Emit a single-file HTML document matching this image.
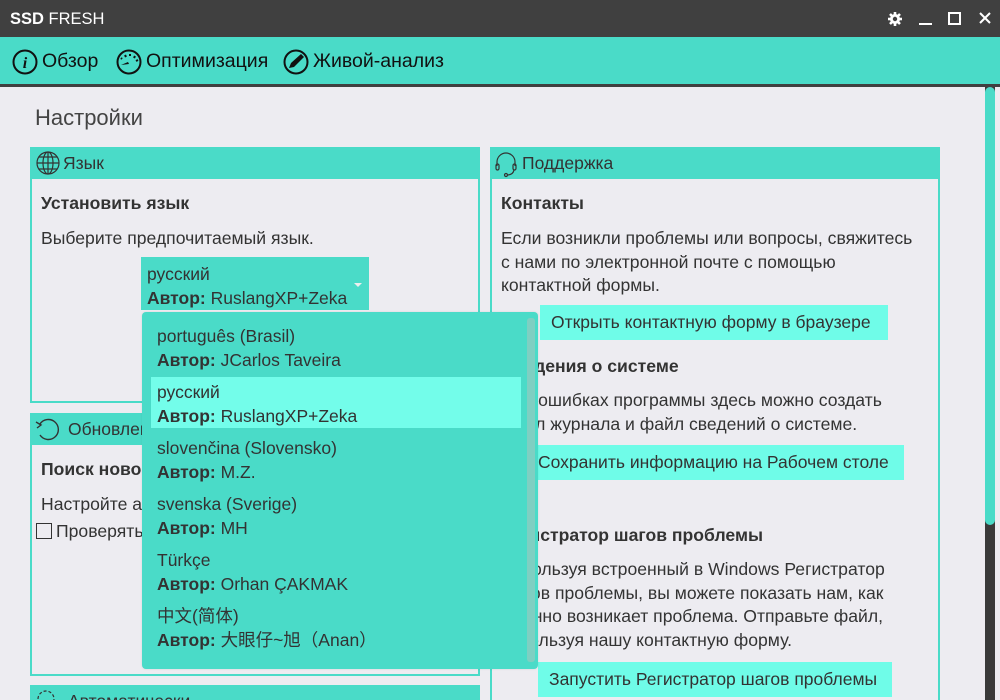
<!DOCTYPE html>
<html><head><meta charset="utf-8"><style>
*{margin:0;padding:0;box-sizing:border-box}
html,body{width:1000px;height:700px;overflow:hidden}
body{background:#edecf1;font-family:"Liberation Sans","Noto Sans CJK SC",sans-serif;color:#333;position:relative;font-size:17px}
.a{position:absolute;white-space:nowrap}
.tb{left:0;top:0;width:1000px;height:37px;background:#404040}
.nav{left:0;top:37px;width:1000px;height:47px;background:#4adbc8}
.line{left:0;top:84px;width:1000px;height:3px;background:#404040}
.ph{background:#4adbc8;height:32px;font-size:17.5px;color:#333;line-height:32px}
.pb{border:2px solid #4adbc8;border-top:none}
b{font-weight:bold}
.btn{background:#6ffce8;height:35px;line-height:35px;font-size:17.5px;padding:0 11px}
.it{left:157px;font-size:17.5px;line-height:24px}
.p{font-size:17.6px}
</style></head><body>
<div class="a tb"></div>
<div class="a" style="left:10px;top:10px;color:#fff;font-size:16.5px"><b>SSD</b> FRESH</div>
<svg class="a" style="left:885px;top:9px" width="110" height="20" viewBox="0 0 110 20">
<g stroke="#fff" stroke-width="2.6" stroke-linecap="butt">
<line x1="10" y1="3" x2="10" y2="17"/><line x1="3" y1="10" x2="17" y2="10"/>
<line x1="5" y1="5" x2="15" y2="15"/><line x1="15" y1="5" x2="5" y2="15"/>
</g>
<circle cx="10" cy="10" r="5" fill="#fff"/><circle cx="10" cy="10" r="2.2" fill="#404040"/>
<g fill="none" stroke="#fff" stroke-width="2">
<line x1="34" y1="15" x2="47" y2="15"/>
<rect x="64" y="4" width="11" height="11"/>
<line x1="95" y1="4" x2="105" y2="14"/><line x1="105" y1="4" x2="95" y2="14"/>
</g></svg>
<div class="a nav"></div>
<div class="a line"></div>
<svg class="a" style="left:12px;top:49px" width="300" height="26" viewBox="0 0 300 26">
<g fill="none" stroke="#111" stroke-width="2">
<circle cx="13" cy="13" r="11.5"/>
<circle cx="117" cy="13" r="11.5"/>
<circle cx="284" cy="13" r="11.5"/>
</g>
<text x="13" y="19" font-family="Liberation Serif" font-style="italic" font-weight="bold" font-size="16" text-anchor="middle" fill="#111">i</text>
<path d="M109 16 L116 13 L117 15 Z" fill="#111"/>
<g stroke="#111" stroke-width="2"><line x1="109" y1="9" x2="110" y2="10"/><line x1="113" y1="6" x2="114" y2="8"/><line x1="118" y1="5" x2="118" y2="7"/><line x1="123" y1="7" x2="122" y2="9"/><line x1="126" y1="11" x2="124" y2="12"/></g>
<path d="M277 19 L279 14 L289 5 L292 8 L282 18 Z" fill="#111"/>
</svg>
<div class="a" style="left:42px;top:50px;font-size:19.5px;color:#111">Обзор</div>
<div class="a" style="left:146px;top:50px;font-size:19.5px;color:#111">Оптимизация</div>
<div class="a" style="left:313px;top:50px;font-size:19.5px;color:#111">Живой-анализ</div>

<div class="a" style="left:35px;top:105px;font-size:22px;color:#444">Настройки</div>

<div class="a" style="left:985px;top:87px;width:10px;height:613px;background:#3a3a3a"></div>
<div class="a" style="left:985px;top:87px;width:10px;height:438px;background:#4adbc8;border-radius:5px"></div>

<div class="a ph" style="left:30px;top:147px;width:450px;padding-left:33px">Язык</div>
<svg class="a" style="left:35px;top:150px" width="26" height="26" viewBox="0 0 26 26"><g fill="none" stroke="#333" stroke-width="1.2"><circle cx="13" cy="13" r="11"/><ellipse cx="13" cy="13" rx="5" ry="11"/><line x1="13" y1="2" x2="13" y2="24"/><line x1="2" y1="13" x2="24" y2="13"/><path d="M4 7H22M4 19H22"/></g></svg>
<div class="a pb" style="left:30px;top:179px;width:450px;height:224px"></div>
<div class="a p" style="left:41px;top:193px"><b>Установить язык</b></div>
<div class="a p" style="left:41px;top:228px">Выберите предпочитаемый язык.</div>
<div class="a" style="left:141px;top:257px;width:228px;height:53px;background:#4adbc8"></div>
<div class="a" style="left:147px;top:262px;font-size:17.5px;line-height:24px">русский<br><b>Автор:</b> RuslangXP+Zeka</div>
<div class="a" style="left:354px;top:283px;width:0;height:0;border-left:4px solid transparent;border-right:4px solid transparent;border-top:4px solid #eee"></div>

<div class="a ph" style="left:30px;top:413px;width:450px;padding-left:38px">Обновления</div>
<svg class="a" style="left:34px;top:416px" width="28" height="26" viewBox="0 0 28 26"><path d="M6 8 A10 10 0 1 1 6 19" fill="none" stroke="#333" stroke-width="1.4"/><path d="M2 6 L7 9 L3 12" fill="none" stroke="#333" stroke-width="1.4"/></svg>
<div class="a pb" style="left:30px;top:445px;width:450px;height:231px"></div>
<div class="a p" style="left:41px;top:459px"><b>Поиск новой версии</b></div>
<div class="a p" style="left:41px;top:494px">Настройте автоматическое обновление</div>
<div class="a" style="left:36px;top:523px;width:16px;height:16px;border:1px solid #333"></div>
<div class="a p" style="left:56px;top:521px">Проверять обновления</div>
<div class="a ph" style="left:30px;top:685px;width:450px;padding-left:38px">Автоматически</div>
<svg class="a" style="left:34px;top:687px" width="24" height="20" viewBox="0 0 24 20"><circle cx="12" cy="12" r="8" fill="none" stroke="#333" stroke-width="1.2" stroke-dasharray="3 2"/></svg>

<div class="a ph" style="left:490px;top:147px;width:450px;padding-left:32px">Поддержка</div>
<svg class="a" style="left:494px;top:150px" width="26" height="28" viewBox="0 0 26 28"><g fill="none" stroke="#333" stroke-width="1.2"><path d="M3 16 V12 A9 9 0 0 1 21 12 V16"/><rect x="2" y="14" width="3" height="6" rx="1.5"/><rect x="19" y="14" width="3" height="6" rx="1.5"/><path d="M20 20 Q19 25 13 25"/><circle cx="12" cy="25" r="1.5"/></g></svg>
<div class="a pb" style="left:490px;top:179px;width:450px;height:530px"></div>
<div class="a p" style="left:501px;top:193px"><b>Контакты</b></div>
<div class="a" style="left:501px;top:227px;font-size:17.6px;line-height:23.5px">Если возникли проблемы или вопросы, свяжитесь<br>с нами по электронной почте с помощью<br>контактной формы.</div>
<div class="a btn" style="left:540px;top:305px;width:348px">Открыть контактную форму в браузере</div>
<div class="a p" style="left:501px;top:356px"><b>Сведения о системе</b></div>
<div class="a" style="left:501px;top:389px;font-size:17.6px;line-height:23.5px">При ошибках программы здесь можно создать<br>файл журнала и файл сведений о системе.</div>
<div class="a btn" style="left:527px;top:445px;width:377px">Сохранить информацию на Рабочем столе</div>
<div class="a p" style="left:501px;top:525px"><b>Регистратор шагов проблемы</b></div>
<div class="a" style="left:501px;top:558px;font-size:17.6px;line-height:23.7px">Используя встроенный в Windows Регистратор<br>шагов проблемы, вы можете показать нам, как<br>именно возникает проблема. Отправьте файл,<br>используя нашу контактную форму.</div>
<div class="a btn" style="left:538px;top:662px;width:354px">Запустить Регистратор шагов проблемы</div>

<div class="a" style="left:142px;top:312px;width:396px;height:357px;background:#4adbc8;border-radius:4px;box-shadow:0 0 2px rgba(0,0,0,.1)"></div>
<div class="a" style="left:527px;top:318px;width:8px;height:344px;background:#7fcfc2;border-radius:3px"></div>
<div class="a" style="left:151px;top:377px;width:370px;height:51px;background:#73fdea"></div>
<div class="a it" style="top:324px">português (Brasil)<br><b>Автор:</b> JCarlos Taveira</div>
<div class="a it" style="top:380px">русский<br><b>Автор:</b> RuslangXP+Zeka</div>
<div class="a it" style="top:436px">slovenčina (Slovensko)<br><b>Автор:</b> M.Z.</div>
<div class="a it" style="top:492px">svenska (Sverige)<br><b>Автор:</b> MH</div>
<div class="a it" style="top:548px">Türkçe<br><b>Автор:</b> Orhan ÇAKMAK</div>
<div class="a it" style="top:604px">中文(简体)<br><b>Автор:</b> 大眼仔~旭（Anan）</div>
</body></html>
